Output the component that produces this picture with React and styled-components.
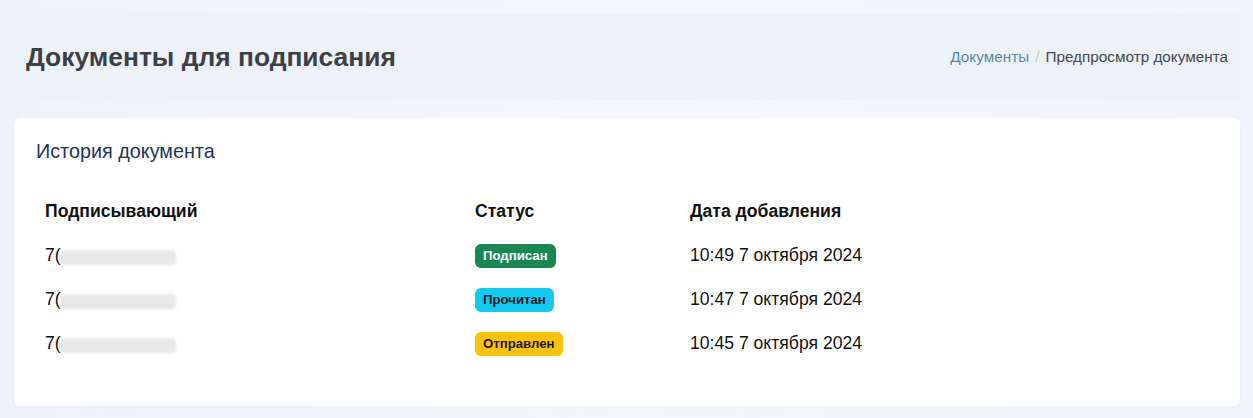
import styled, { createGlobalStyle } from "styled-components";

const GlobalStyle = createGlobalStyle`
  html, body {
    margin: 0;
    padding: 0;
  }
  body {
    background: #f2f5fc;
    font-family: "Liberation Sans", Arial, sans-serif;
  }
`;

const Page = styled.div`
  width: 1253px;
  min-height: 418px;
  box-sizing: border-box;
  padding: 14px 13px 13px 14px;
  display: flex;
  flex-direction: column;
  gap: 18px;
  background: linear-gradient(90deg, #eef2fb 0%, #f4f6fd 50%, #f1f4fc 100%);
`;

const Header = styled.header`
  height: 86px;
  box-sizing: border-box;
  padding: 0 12px;
  display: flex;
  align-items: center;
  justify-content: space-between;
  background: #edf1f8;
  border-radius: 3px;
`;

const Title = styled.h1`
  margin: 0;
  font-size: 26.4px;
  font-weight: 700;
  color: #3b3f46;
`;

const Breadcrumbs = styled.nav`
  display: flex;
  align-items: center;
  gap: 6px;
  font-size: 15.3px;
  color: #44484e;
`;

const Crumb = styled.a`
  color: #5b8aa0;
  text-decoration: none;
`;

const Sep = styled.span`
  color: #c3c8cf;
`;

const Card = styled.section`
  background: #fff;
  border-radius: 6px;
  padding: 22px 22px 41px 22px;
  box-shadow: 0 1px 3px rgba(60, 80, 130, 0.05);
`;

const CardTitle = styled.h2`
  margin: 0 0 27px 0;
  font-size: 19.8px;
  font-weight: 400;
  color: #1d3557;
`;

const Table = styled.table`
  width: 100%;
  table-layout: fixed;
  border-collapse: collapse;
  font-size: 17.6px;
  color: #111;

  th, td {
    text-align: left;
    padding: 0 9px;
  }
`;

const Th = styled.th`
  height: 43px;
  font-weight: 700;
  width: ${(p) => p.$w || "auto"};
`;

const Td = styled.td`
  height: 44px;
`;

const Phone = styled.span`
  display: inline-flex;
  align-items: center;
`;

const Blur = styled.span`
  display: inline-block;
  width: 116px;
  height: 15px;
  margin-left: -1px;
  border-radius: 4px;
  background: #e8e8e8;
  filter: blur(1.2px);
  transform: translateY(2px);
`;

const badgeColors = {
  signed: { bg: "#198754", fg: "#fff" },
  read: { bg: "#14c8ee", fg: "#1a1a1a" },
  sent: { bg: "#fdc20c", fg: "#1a1a1a" },
};

const Badge = styled.span`
  display: inline-block;
  padding: 5px 8px;
  font-size: 13.2px;
  font-weight: 700;
  line-height: 1;
  border-radius: 6px;
  background: ${(p) => badgeColors[p.$kind].bg};
  color: ${(p) => badgeColors[p.$kind].fg};
  transform: translateY(1px);
`;

const rows = [
  { status: "signed", label: "Подписан", date: "10:49 7 октября 2024" },
  { status: "read", label: "Прочитан", date: "10:47 7 октября 2024" },
  { status: "sent", label: "Отправлен", date: "10:45 7 октября 2024" },
];

export default function App() {
  return (
    <>
      <GlobalStyle />
      <Page>
        <Header>
          <Title>Документы для подписания</Title>
          <Breadcrumbs>
            <Crumb href="#">Документы</Crumb>
            <Sep>/</Sep>
            <span>Предпросмотр документа</span>
          </Breadcrumbs>
        </Header>

        <Card>
          <CardTitle>История документа</CardTitle>
          <Table>
            <thead>
              <tr>
                <Th $w="412px">Подписывающий</Th>
                <Th $w="197px">Статус</Th>
                <Th>Дата добавления</Th>
              </tr>
            </thead>
            <tbody>
              {rows.map((r) => (
                <tr key={r.date}>
                  <Td>
                    <Phone>
                      7(<Blur />
                    </Phone>
                  </Td>
                  <Td>
                    <Badge $kind={r.status}>{r.label}</Badge>
                  </Td>
                  <Td>{r.date}</Td>
                </tr>
              ))}
            </tbody>
          </Table>
        </Card>
      </Page>
    </>
  );
}
